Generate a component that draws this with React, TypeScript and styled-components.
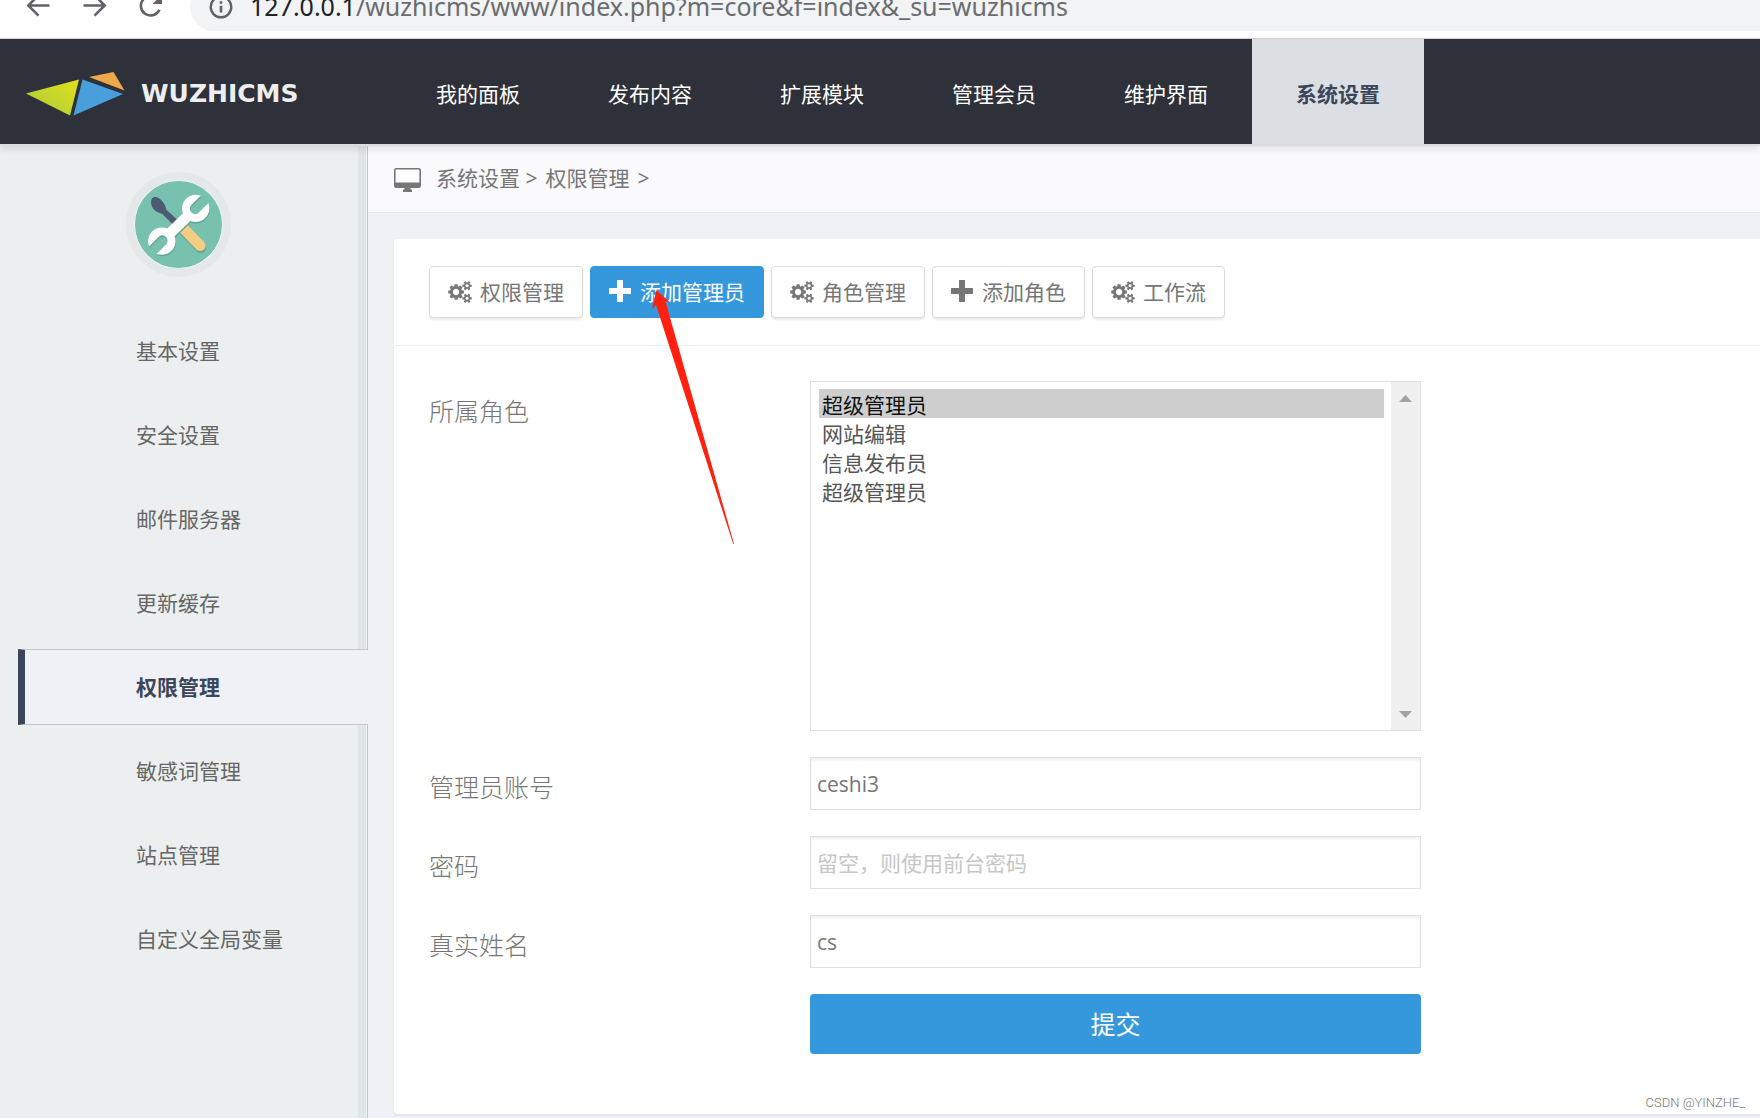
import React, { useRef, useState } from "react";
import styled, { createGlobalStyle, css } from "styled-components";

const color = {
  header: "#2e3139",
  headerActive: "#dbdee3",
  navy: "#3b465a",
  sidebar: "#ebefef",
  page: "#f0f1f7",
  blue: "#3598dc",
  text: "#767676",
  line: "#e0e0e0",
};

const GlobalStyle = createGlobalStyle`
  *, *::before, *::after { box-sizing: border-box; }
  html, body { margin: 0; padding: 0; }
  body {
    background: ${color.page};
    color: ${color.text};
    font-family: "Open Sans", "Noto Sans CJK SC", sans-serif;
    font-size: 21px;
    line-height: 28px;
  }
  button, input, select { font: inherit; color: inherit; margin: 0; }
  a { color: inherit; text-decoration: none; }
  svg { display: block; flex: none; }
`;

const Page = styled.div`
  display: flex;
  flex-direction: column;
  min-height: 100vh;
  position: relative;
  overflow: hidden;
`;

/* Browser address strip */

const BrowserBar = styled.div`
  display: flex;
  align-items: flex-end;
  height: 39px;
  padding: 0 0 7px 22px;
  overflow: hidden;
  background: #fff;
  border-bottom: 1px solid #d5dadb;
`;

const BrowserButton = styled.button`
  display: flex;
  align-items: center;
  justify-content: center;
  width: 34px;
  height: 49px;
  margin-right: 22px;
  padding: 0;
  border: 0;
  background: none;
  color: #5f6368;
`;

const AddressField = styled.div`
  display: flex;
  align-items: center;
  flex: 1;
  height: 49px;
  padding-left: 19px;
  gap: 17px;
  border-radius: 25px 0 0 25px;
  background: #f1f3f4;
  color: #5f6368;
`;

const Address = styled.span`
  font-family: "Noto Sans", sans-serif;
  font-size: 25px;
  line-height: 32px;
  padding-bottom: 2px;
  white-space: nowrap;
  color: #6a6c70;

  b {
    font-weight: 400;
    color: #202124;
  }
`;

/* Header */

const Header = styled.header`
  display: flex;
  position: relative;
  z-index: 2;
  height: 105px;
  background: ${color.header};
  box-shadow: 0 2px 0 #dcdde4, 0 4px 8px rgba(40, 44, 60, 0.14);
`;

const Brand = styled.a`
  display: flex;
  align-items: center;
  gap: 16px;
  width: 392px;
  padding: 4px 0 0 26px;
  color: #eceef0;
  font-family: "DejaVu Sans", sans-serif;
  font-size: 25px;
  font-weight: 700;
`;

const Nav = styled.nav`
  display: flex;
`;

const NavLink = styled.a<{ $active?: boolean }>`
  display: flex;
  align-items: center;
  padding: 4px 44px 0;
  color: #fff;
  white-space: nowrap;
  ${(p) =>
    p.$active &&
    css`
      background: ${color.headerActive};
      color: ${color.navy};
      font-weight: 700;
    `}
`;

/* Body */

const Body = styled.div`
  display: flex;
  flex: 1;
`;

const Sidebar = styled.aside`
  flex: none;
  width: 368px;
  padding-top: 28px;
  border-right: 1px solid #c3c7cd;
  background: linear-gradient(to left, #f0f3f3 1px, #e0e6e5 1px, #e0e6e5 9px, ${color.sidebar} 9px);
`;

const Avatar = styled.div`
  width: 105px;
  height: 105px;
  margin: 0 0 36px 126px;
  padding: 8px;
  border-radius: 50%;
  background: #e4e8e9;
`;

const SideMenu = styled.nav`
  display: flex;
  flex-direction: column;
  gap: 8px;
  margin: 0 -1px 0 18px;
`;

const SideLink = styled.a<{ $active?: boolean }>`
  display: flex;
  align-items: center;
  height: 76px;
  padding-left: 111px;
  border: solid transparent;
  border-width: 1px 0 1px 7px;
  color: #666;
  ${(p) =>
    p.$active &&
    css`
      border-color: #c3c7cd #c3c7cd #c3c7cd ${color.navy};
      background: ${color.page};
      color: ${color.navy};
      font-weight: 700;
    `}
`;

const Main = styled.main`
  flex: 1;
  min-width: 0;
`;

const Breadcrumb = styled.nav`
  display: flex;
  align-items: center;
  height: 69px;
  padding-left: 26px;
  border-bottom: 1px solid #e7e8ee;
  background: #fafafc;
`;

const Crumbs = styled.span`
  display: flex;
  gap: 8px;
  padding-left: 15px;
`;

const Content = styled.div`
  padding: 26px 0 4px 26px;
`;

const Panel = styled.section`
  position: relative;
  border-radius: 4px 0 0 4px;
  background: #fff;
  box-shadow: 0 2px 2px rgba(60, 70, 90, 0.08);
`;

const Actions = styled.div`
  display: flex;
  gap: 7px;
  padding: 27px 35px;
  border-bottom: 1px solid #ededed;
`;

const Action = styled.button<{ $primary?: boolean }>`
  display: flex;
  align-items: center;
  gap: 8px;
  height: 52px;
  padding: 0 18px;
  border: 1px solid ${(p) => (p.$primary ? color.blue : "#dcdcdc")};
  border-radius: 4px;
  background: ${(p) => (p.$primary ? color.blue : "#fff")};
  color: ${(p) => (p.$primary ? "#fff" : color.text)};
  box-shadow: ${(p) => (p.$primary ? "none" : "0 2px 2px rgba(0, 0, 0, 0.08)")};
  white-space: nowrap;
`;

const Form = styled.form`
  display: grid;
  grid-template-columns: 381px minmax(0, 611px);
  row-gap: 26px;
  padding: 35px 35px 60px;
`;

const Label = styled.label`
  padding-top: 12px;
  font-size: 25px;
  font-weight: 300;
  line-height: 36px;
`;

const ListFrame = styled.div`
  display: flex;
  height: 350px;
  border: 1px solid ${color.line};
  background: #fff;
`;

const RoleList = styled.select`
  flex: 1;
  min-width: 0;
  height: 100%;
  padding: 7px 7px 7px 8px;
  border: 0;
  outline: 0;
  background: none;
  color: #555;
  scrollbar-width: none;

  option {
    height: 29px;
    padding: 0 3px;
    line-height: 24px;
  }
`;

const ScrollRail = styled.div`
  display: flex;
  flex-direction: column;
  justify-content: space-between;
  width: 29px;
  background: #f0f0f0;
`;

const ScrollButton = styled.button`
  display: flex;
  align-items: center;
  justify-content: center;
  height: 32px;
  padding: 0;
  border: 0;
  background: none;
`;

const TextInput = styled.input`
  width: 100%;
  height: 53px;
  padding: 0 6px;
  border: 1px solid ${color.line};
  border-radius: 0;
  outline: 0;
  background: #fff;
  box-shadow: inset 0 2px 3px rgba(0, 0, 0, 0.07);

  &::placeholder {
    color: #c6c6c6;
    opacity: 1;
  }
`;

const Submit = styled.button`
  grid-column: 2;
  height: 60px;
  border: 0;
  border-radius: 4px;
  background: ${color.blue};
  color: #fff;
  font-size: 25px;
`;

const Pointer = styled.svg`
  position: absolute;
  left: 256px;
  top: 49px;
  pointer-events: none;
`;

const Watermark = styled.span`
  position: absolute;
  right: 15px;
  bottom: 7px;
  font-family: Roboto, sans-serif;
  font-size: 13px;
  font-weight: 300;
  line-height: 16px;
  color: #777;
`;

/* Drawings */

const strokeProps = { fill: "none", stroke: "currentColor", strokeWidth: 2.6 };

const BackIcon = () => (
  <svg width="24" height="24" viewBox="0 0 24 24" {...strokeProps}>
    <path d="M22.500 10.500H2M11.500 .3L1.300 10.500l10.200 10.200" />
  </svg>
);

const ForwardIcon = () => (
  <svg width="24" height="24" viewBox="0 0 24 24" {...strokeProps}>
    <path d="M.5 10.500H21M11.500 .3L21.700 10.500 11.500 20.700" />
  </svg>
);

const ReloadIcon = () => (
  <svg width="24" height="24" viewBox="0 0 24 24" {...strokeProps}>
    <path d="M20.500 14.700A9.700 9.700 0 1 1 19 4.500" />
    <path d="M23-.5v9.500h-9.500z" fill="currentColor" stroke="none" />
  </svg>
);

const InfoIcon = () => (
  <svg width="24" height="24" viewBox="0 0 24 24" {...strokeProps}>
    <circle cx="12" cy="12" r="10.300" strokeWidth="2.400" />
    <path d="M12 10.800v6.700M12 6.300v2.500" />
  </svg>
);

const LogoMark = () => (
  <svg width="99" height="44" viewBox="0 0 99 44">
    <defs>
      <linearGradient id="leaf" x1="0" y1="1" x2="1" y2="0">
        <stop offset="0" stopColor="#aacb3c" />
        <stop offset="1" stopColor="#e0e01c" />
      </linearGradient>
    </defs>
    <path d="M0 21.500L53 7.500 44 43.500z" fill="url(#leaf)" />
    <path d="M56.500 7.500L97 22 47.500 43.500z" fill="#489fdb" />
    <path d="M63 5L87.500 0 98.500 18.500z" fill="#eea84b" />
  </svg>
);

const ToolsIcon = () => (
  <svg width="89" height="89" viewBox="0 0 88 88">
    <defs>
      <mask id="wrench">
        <g fill="#fff" stroke="#fff">
          <circle cx="61" cy="28" r="13.500" stroke="none" />
          <circle cx="27.500" cy="60.500" r="13.500" stroke="none" />
          <path d="M61 28L27.500 60.500" strokeWidth="10.500" />
        </g>
        <path
          d="M60.500 28.500L79 10M28 60L9 79"
          stroke="#000"
          strokeWidth="10.500"
          strokeLinecap="round"
        />
      </mask>
    </defs>
    <circle cx="44" cy="44" r="43.500" fill="#77c1ae" stroke="#eef3f3" />
    <path d="M17.500 18.500c2-3 7-2 10 2 3 3 4 6 4.500 9L43 39.500l-4.500 4.500L28 33.500c-4-1-7-2.500-9-5-2-3-3-7-1.500-10z" fill="#4d5b72" />
    <path d="M48 48.500l18 18.500" stroke="#5fa593" strokeWidth="10.500" strokeLinecap="round" />
    <path d="M47.500 46.500l18 18.500" stroke="#f4cd84" strokeWidth="10.500" strokeLinecap="round" />
    <g transform="translate(.5 1.5)">
      <rect width="88" height="88" fill="#5fa593" mask="url(#wrench)" />
    </g>
    <rect width="88" height="88" fill="#fff" mask="url(#wrench)" />
  </svg>
);

const DesktopIcon = () => (
  <svg width="27" height="28" viewBox="0 -4 27 28">
    <rect x=".8" y=".8" width="25.400" height="18.400" rx="1.500" fill="#fff" stroke="#767676" strokeWidth="1.600" />
    <path d="M1 14.500h25V19H1zM10.500 19h6v2.500H18V24H9v-2.500h1.500z" fill="#767676" />
  </svg>
);

const satellite =
  "v140q0 16-149 31-12 27-30 52 51 113 51 138 0 4-4 7-122 71-124 71-8 0-46-47t-52-68q-20 2-30 2t-30-2q-14 21-52 68t-46 47q-2 0-124-71-4-3-4-7 0-25 51-138-18-25-30-52-149-15-149-31v-140q0-16 149-31 13-29 30-52-51-113-51-138 0-4 4-7 4-2 35-20t59-34 30-16q8 0 46 46.500t52 67.500q20-2 30-2t30 2q51-71 92-112l6-2q4 0 124 70 4 3 4 7 0 25-51 138 17 23 30 52 149 15 149 31z";

const CogsIcon = () => (
  <svg width="24" height="22" viewBox="0 0 1920 1792" fill="currentColor">
    <path
      d={
        "M896 896q0-106-75-181t-181-75-181 75-75 181 75 181 181 75 181-75 75-181zm768 512q0-52-38-90t-90-38-90 38-38 90q0 53 37.500 90.500t90.500 37.500 90.500-37.500 37.500-90.500zm0-1024q0-52-38-90t-90-38-90 38-38 90q0 53 37.500 90.500t90.500 37.500 90.500-37.500 37.500-90.500zm-384 421v185q0 10-7 19.500t-16 10.500l-155 24q-11 35-32 76 34 48 90 115 7 11 7 20 0 12-7 19-23 30-82.500 89.500t-78.500 59.500q-11 0-21-7l-115-90q-37 19-77 31-11 108-23 155-7 24-30 24h-186q-11 0-20-7.500t-10-17.500l-23-153q-34-10-75-31l-118 89q-7 7-20 7-11 0-21-8-144-133-144-160 0-9 7-19 10-14 41-53t47-61q-23-44-35-82l-152-24q-10-1-17-9.500t-7-19.500v-185q0-10 7-19.500t16-10.500l155-24q11-35 32-76-34-48-90-115-7-11-7-20 0-12 7-20 22-30 82-89t79-59q11 0 21 7l115 90q34-18 77-32 11-108 23-154 7-24 30-24h186q11 0 20 7.500t10 17.500l23 153q34 10 75 31l118-89q8-7 20-7 11 0 21 8 144 133 144 160 0 8-7 19-12 16-42 54t-45 60q23 48 34 82l152 23q10 2 17 10.500t7 19.500zm640 533" +
        satellite +
        "M1920 314" +
        satellite
      }
    />
  </svg>
);

const PlusIcon = () => (
  <svg width="23" height="24" viewBox="0 0 23 24" fill="currentColor">
    <path d="M8.500 0h5q.5 0 .5.500V8h7.500q.5 0 .5.500v5q0 .5-.5.500H14v7.500q0 .5-.5.500h-5q-.5 0-.5-.5V14H.5q-.5 0-.5-.5v-5Q0 8 .5 8H8V.5q0-.5.5-.5z" />
  </svg>
);

/* Data */

const navItems = ["我的面板", "发布内容", "扩展模块", "管理会员", "维护界面", "系统设置"];

const sideItems = [
  "基本设置",
  "安全设置",
  "邮件服务器",
  "更新缓存",
  "权限管理",
  "敏感词管理",
  "站点管理",
  "自定义全局变量",
];

const actions = [
  { label: "权限管理", icon: CogsIcon },
  { label: "添加管理员", icon: PlusIcon, primary: true },
  { label: "角色管理", icon: CogsIcon },
  { label: "添加角色", icon: PlusIcon },
  { label: "工作流", icon: CogsIcon },
];

const roles = ["超级管理员", "网站编辑", "信息发布员", "超级管理员"];

export default function App() {
  const list = useRef<HTMLSelectElement>(null);
  const [account, setAccount] = useState("ceshi3");
  const [realName, setRealName] = useState("cs");
  const scroll = (delta: number) => list.current?.scrollBy({ top: delta });

  return (
    <Page>
      <GlobalStyle />
      <BrowserBar>
        <BrowserButton type="button" aria-label="后退"><BackIcon /></BrowserButton>
        <BrowserButton type="button" aria-label="前进"><ForwardIcon /></BrowserButton>
        <BrowserButton type="button" aria-label="刷新"><ReloadIcon /></BrowserButton>
        <AddressField>
          <InfoIcon />
          <Address>
            <b>127.0.0.1</b>/wuzhicms/www/index.php?m=core&amp;f=index&amp;_su=wuzhicms
          </Address>
        </AddressField>
      </BrowserBar>

      <Header>
        <Brand href="#">
          <LogoMark />
          WUZHICMS
        </Brand>
        <Nav>
          {navItems.map((item) => (
            <NavLink key={item} href="#" $active={item === "系统设置"}>
              {item}
            </NavLink>
          ))}
        </Nav>
      </Header>

      <Body>
        <Sidebar>
          <Avatar>
            <ToolsIcon />
          </Avatar>
          <SideMenu>
            {sideItems.map((item) => (
              <SideLink key={item} href="#" $active={item === "权限管理"}>
                {item}
              </SideLink>
            ))}
          </SideMenu>
        </Sidebar>

        <Main>
          <Breadcrumb>
            <DesktopIcon />
            <Crumbs>
              <span>系统设置 &gt;</span>
              <a href="#">权限管理</a>
              <span>&gt;</span>
            </Crumbs>
          </Breadcrumb>

          <Content>
            <Panel>
              <Actions>
                {actions.map(({ label, icon: Icon, primary }) => (
                  <Action key={label} type="button" $primary={primary}>
                    <Icon />
                    {label}
                  </Action>
                ))}
              </Actions>

              <Form onSubmit={(e) => e.preventDefault()}>
                <Label htmlFor="role">所属角色</Label>
                <ListFrame>
                  <RoleList id="role" ref={list} size={10} defaultValue="0">
                    {roles.map((role, i) => (
                      <option key={i} value={String(i)}>
                        {role}
                      </option>
                    ))}
                  </RoleList>
                  <ScrollRail>
                    <ScrollButton type="button" aria-label="向上滚动" onClick={() => scroll(-29)}>
                      <svg width="13" height="7" viewBox="0 0 13 7">
                        <path d="M0 7L6.500 0 13 7z" fill="#a3a3a3" />
                      </svg>
                    </ScrollButton>
                    <ScrollButton type="button" aria-label="向下滚动" onClick={() => scroll(29)}>
                      <svg width="13" height="7" viewBox="0 0 13 7">
                        <path d="M0 0h13L6.500 7z" fill="#a3a3a3" />
                      </svg>
                    </ScrollButton>
                  </ScrollRail>
                </ListFrame>

                <Label htmlFor="account">管理员账号</Label>
                <TextInput id="account" value={account} onChange={(e) => setAccount(e.target.value)} />

                <Label htmlFor="password">密码</Label>
                <TextInput id="password" type="password" placeholder="留空，则使用前台密码" />

                <Label htmlFor="realname">真实姓名</Label>
                <TextInput id="realname" value={realName} onChange={(e) => setRealName(e.target.value)} />

                <Submit type="submit">提交</Submit>
              </Form>

              <Pointer width="86" height="258" viewBox="0 0 86 258">
                <path d="M6.500 2L20 14.500 15.500 13.500 84 256 83.200 256 6 17 2 21z" fill="#ff2010" />
              </Pointer>
            </Panel>
          </Content>
        </Main>
      </Body>
      <Watermark>CSDN @YINZHE_</Watermark>
    </Page>
  );
}
